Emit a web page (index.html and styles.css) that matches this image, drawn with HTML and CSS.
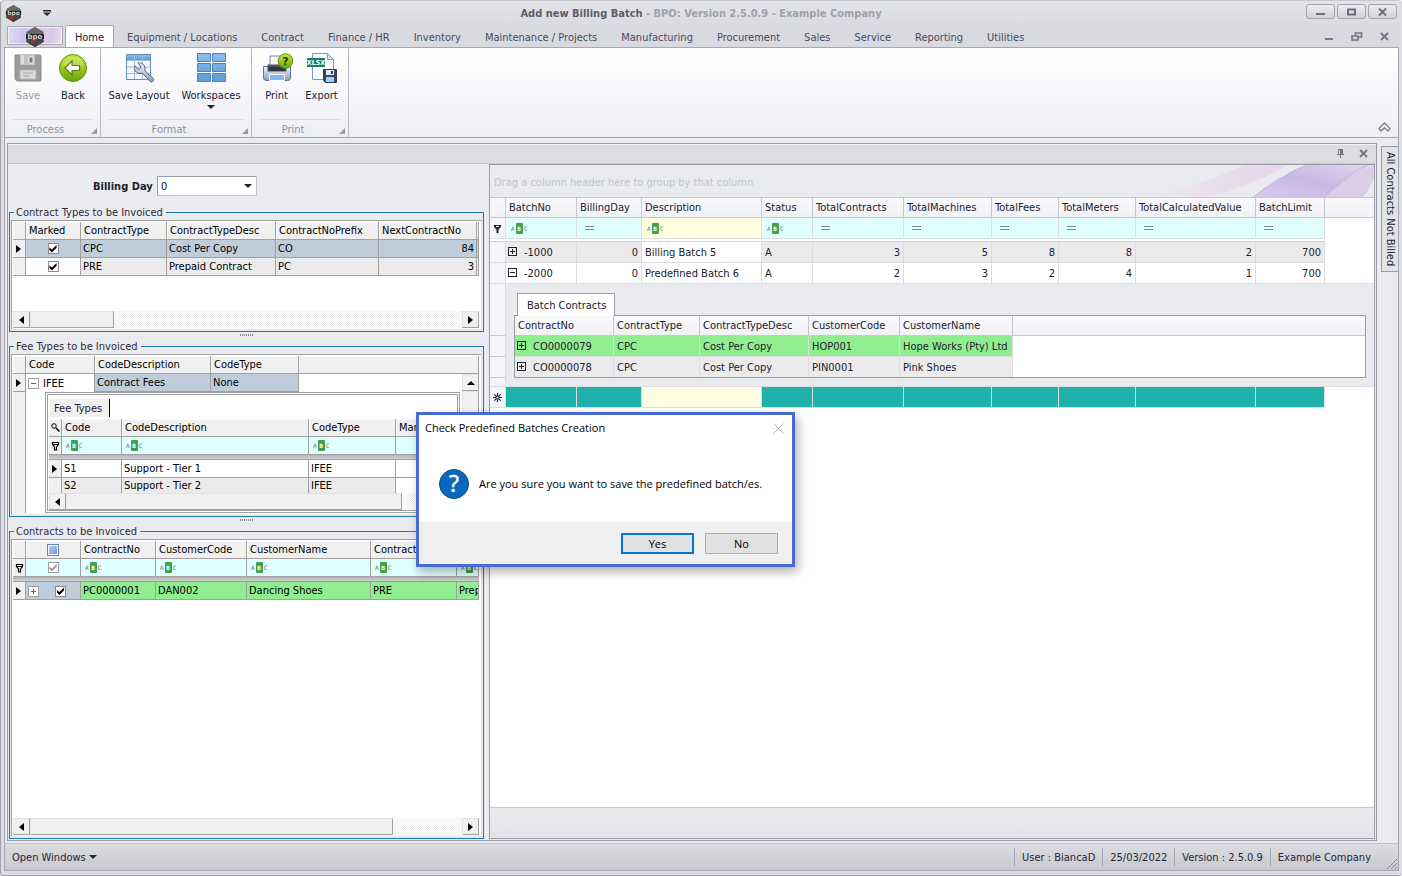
FILE: index.html
```html
<!DOCTYPE html>
<html lang="en">
<head>
<meta charset="utf-8">
<title>Add new Billing Batch - BPO: Version 2.5.0.9 - Example Company</title>
<link rel="stylesheet" href="styles.css">
</head>
<body>
<svg class="defs" aria-hidden="true">
  <defs>
    <linearGradient id="gGreen" x1="0" y1="0" x2="0" y2="1"><stop offset="0" stop-color="#c4e838"/><stop offset=".5" stop-color="#96cc1c"/><stop offset="1" stop-color="#6da30c"/></linearGradient>
    <linearGradient id="gBlue" x1="0" y1="0" x2="0" y2="1"><stop offset="0" stop-color="#8cbfea"/><stop offset="1" stop-color="#5c9bd6"/></linearGradient>
    <linearGradient id="gSteel" x1="0" y1="0" x2="0" y2="1"><stop offset="0" stop-color="#f2f5fa"/><stop offset="1" stop-color="#8f9dbb"/></linearGradient>
    <linearGradient id="gHex" x1="0" y1="0" x2="0" y2="1"><stop offset="0" stop-color="#787878"/><stop offset="1" stop-color="#303030"/></linearGradient>
    <symbol id="logo" viewBox="0 0 20 20">
      <path d="M10 0l8.500 5v10L10 20l-8.500-5V5z" fill="url(#gHex)"/>
      <path d="M10 0l8.500 5-8.500 2-8.500-2z" fill="#696969"/>
      <path d="M10 14l8.500-1v2L10 20l-8.500-5v-2z" fill="#444"/>
      <path d="M1 7h18v5H1z" fill="#222"/>
      <text x="10" y="12" text-anchor="middle" font-family="DejaVu Sans" font-weight="700" font-size="7" fill="#d8d8d8">bpo</text>
      <path d="M6 13l3 3M9 13l-3 3" stroke="#a92b2b" stroke-width="1.500"/>
    </symbol>
    <symbol id="funnel" viewBox="0 0 9 10"><path d="M1.500 1.500h6v2L5.500 6v3h-2V6l-2-2.500z" fill="none" stroke="#000" stroke-width="1.200"/><path d="M1 3.500h7" stroke="#000"/></symbol>
  </defs>
</svg>
<div class="window">
  <header class="titlebar">
    <svg class="title-logo"><use href="#logo"/></svg>
    <button class="quick" aria-label="Customize quick access"><svg width="8" height="6"><path d="M0 0h8v1.500H0zM0 2.500h8L4 6z" fill="#26263a"/></svg></button>
    <h1><strong>Add new Billing Batch</strong> - BPO: Version 2.5.0.9 - Example Company</h1>
    <div class="winbtns">
      <button aria-label="Minimize"><svg width="9" height="8"><path d="M0 5h9v2H0z" fill="#6d6d7c"/></svg></button>
      <button aria-label="Maximize"><svg width="9" height="8"><path d="M1 1.500h7v5H1z" fill="none" stroke="#6d6d7c" stroke-width="2"/></svg></button>
      <button aria-label="Close"><svg width="9" height="8"><path d="M1 .5l7 7M8 .5l-7 7" stroke="#6d6d7c" stroke-width="2"/></svg></button>
    </div>
  </header>
  <nav class="tabs">
    <button class="app" aria-label="Application menu"><svg width="20" height="20"><use href="#logo"/></svg></button>
    <button class="tab on">Home</button>
    <button class="tab">Equipment / Locations</button>
    <button class="tab">Contract</button>
    <button class="tab">Finance / HR</button>
    <button class="tab">Inventory</button>
    <button class="tab">Maintenance / Projects</button>
    <button class="tab">Manufacturing</button>
    <button class="tab">Procurement</button>
    <button class="tab">Sales</button>
    <button class="tab">Service</button>
    <button class="tab">Reporting</button>
    <button class="tab">Utilities</button>
    <div class="mdi">
      <button aria-label="Minimize child"><svg width="10" height="9"><path d="M1 6h8v2H1z" fill="#767685"/></svg></button>
      <button aria-label="Restore child"><svg width="12" height="9"><path d="M4.500 3V1h6v4H8M1 4h6v4H1z" fill="none" stroke="#767685" stroke-width="1.700"/></svg></button>
      <button aria-label="Close child"><svg width="10" height="9"><path d="M1 1l7 7M8 1L1 8" stroke="#767685" stroke-width="2"/></svg></button>
    </div>
  </nav>
  <section class="ribbon">
    <div class="rgroup g1">
      <div class="cmds">
        <button class="cmd dis" disabled>
          <svg width="32" height="32"><path d="M3 3h25a1 1 0 011 1v24a1 1 0 01-1 1H5l-2-2z" fill="#9c9c9c" stroke="#8b8b8b"/><path d="M8 3h15v10H8z" fill="#c4c4c4"/><path d="M9 3h3v9H9z" fill="#e0e0e0"/><path d="M17 5h4v6h-4z" fill="#777" stroke="#f0f0f0"/><path d="M8 18h16v9H8z" fill="#dcdcdc" stroke="#b3b3b3"/><path d="M11 21h10M11 24h7" stroke="#a5a5a5"/></svg>
          <span>Save</span>
        </button>
        <button class="cmd">
          <svg width="32" height="32"><circle cx="16" cy="16" r="13.500" fill="url(#gGreen)" stroke="#5e9208"/><path d="M5 13a11.500 11.500 0 0122 0c-6 4-16 4-22 0z" fill="#fff" opacity=".22"/><path d="M8 16l7-7v4.500h7.500v5H15V23z" fill="#fff" stroke="#5b7f1e" stroke-width="1.200"/></svg>
          <span>Back</span>
        </button>
      </div>
      <div class="caption">Process</div>
    </div>
    <div class="rgroup g2">
      <div class="cmds">
        <button class="cmd wide">
          <svg width="32" height="32"><path d="M3.500 2.500h24v25h-24z" fill="#f4f8fd" stroke="#6b8bb7"/><path d="M4 3h23v5H4z" fill="url(#gBlue)"/><path d="M11.500 3v24M19.500 3v24M4 8.500h23M4 15h23M4 21.500h23" stroke="#a3bbd9"/><path d="M12 14c-1.500 3.500 1 7.500 5 7.500 1 0 1.600-.2 2.300-.5l7.700 8.300c2 2 5-1 3-3L21.700 18.500c1-3-.5-6.500-4-7.500-1-.3-2-.2-3 0l3.300 3.300-.8 2.400-2.400.6z" fill="url(#gSteel)" stroke="#52627f"/></svg>
          <span>Save Layout</span>
        </button>
        <button class="cmd wide">
          <svg width="32" height="32"><g fill="url(#gBlue)" stroke="#4b82bd"><path d="M2.500 1.500h13v8h-13zM17.500 1.500h13v8h-13zM2.500 11.500h13v8h-13zM17.500 11.500h13v8h-13zM2.500 21.500h13v8h-13zM17.500 21.500h13v8h-13z"/></g></svg>
          <span>Workspaces</span><i class="down"></i>
        </button>
      </div>
      <div class="caption">Format</div>
    </div>
    <div class="rgroup g3">
      <div class="cmds">
        <button class="cmd">
          <svg width="32" height="32"><path d="M9 17V4h11l4 4v9z" fill="#f5f8fc" stroke="#7286a8"/><path d="M2.500 14.500h27v11q0 3-3 3h-21q-3 0-3-3z" fill="url(#gSteel)" stroke="#5d6f92"/><path d="M6.500 12.500h19v7h-19z" fill="#4a5366"/><path d="M8 15h16v4H8z" fill="#2f3644"/><path d="M8.500 22.500h15v6h-15z" fill="#7db9ec" stroke="#f8fbff"/><circle cx="24.500" cy="9" r="7.300" fill="url(#gGreen)" stroke="#5c9110"/><text x="24.500" y="13" font-family="DejaVu Sans" font-size="11" font-weight="700" text-anchor="middle" fill="#26390a">?</text></svg>
          <span>Print</span>
        </button>
        <button class="cmd">
          <svg width="32" height="32"><path d="M6.500 1.500h15l6 6v20h-21z" fill="#fbfcfe" stroke="#8c98b0"/><path d="M21.500 1.500v6h6z" fill="#dbe2ee" stroke="#8c98b0"/><path d="M1 6h18v9H1z" fill="#14805e"/><text x="10" y="13" font-family="DejaVu Sans Condensed, DejaVu Sans" font-size="7" font-weight="700" text-anchor="middle" fill="#fff">XLSX</text><path d="M17.500 17.500h13v13h-11l-2-2z" fill="#3a4763" stroke="#2e3950"/><path d="M20 18h8v5h-8z" fill="#e2e9f5"/><path d="M25 19h2v3h-2z" fill="#33405a"/><path d="M20 25h8v5h-8z" fill="#9fd0f4"/></svg>
          <span>Export</span>
        </button>
      </div>
      <div class="caption">Print</div>
    </div>
    <button class="collapse" aria-label="Collapse ribbon"><svg width="13" height="10"><path d="M1 6.500L6.500 1 12 6.500 10 9 6.500 5.700 3 9z" fill="#f4f4f7" stroke="#7d7d8b" stroke-width="1.300"/></svg></button>
  </section>

  <main class="work">
    <section class="dock">
      <div class="dockhead">
        <button aria-label="Pin"><svg width="9" height="9"><path d="M2 0h5v5H2zM1 5h7v1H1zM4 6h1v3H4z" fill="#767685"/><path d="M3 1h1v4H3z" fill="#dcdde1"/></svg></button>
        <button aria-label="Close panel"><svg width="9" height="9"><path d="M1 1l7 7M8 1L1 8" stroke="#767685" stroke-width="2"/></svg></button>
      </div>
      <div class="split">
        <div class="left">
          <div class="billing">
            <label for="day">Billing Day</label>
            <div class="combo"><select id="day"><option>0</option></select></div>
          </div>

          <fieldset class="box">
            <legend>Contract Types to be Invoiced</legend>
            <div class="classic">
              <table class="t">
                <colgroup><col class="w13"><col class="w55"><col class="w86"><col class="w109"><col class="w103"><col class="w98"><col></colgroup>
                <thead><tr><th></th><th>Marked</th><th>ContractType</th><th>ContractTypeDesc</th><th>ContractNoPrefix</th><th>NextContractNo</th><th></th></tr></thead>
                <tbody>
                  <tr class="sel"><td class="ind"><i class="ptr"></i></td><td class="mid"><input type="checkbox" checked aria-label="Mark CPC"></td><td>CPC</td><td>Cost Per Copy</td><td>CO</td><td class="num">84</td><td></td></tr>
                  <tr class="alt"><td class="ind"></td><td class="mid white"><input type="checkbox" checked aria-label="Mark PRE"></td><td>PRE</td><td>Prepaid Contract</td><td>PC</td><td class="num">3</td><td></td></tr>
                </tbody>
              </table>
              <div class="void"></div>
              <div class="hs"><button class="lt" aria-label="Scroll left"></button><div class="thumb short"></div><div class="track"></div><button class="rt" aria-label="Scroll right"></button></div>
            </div>
          </fieldset>
          <div class="grip"></div>

          <fieldset class="box">
            <legend>Fee Types to be Invoiced</legend>
            <div class="classic">
              <table class="t">
                <colgroup><col class="w13"><col class="w69"><col class="w116"><col class="w88"><col></colgroup>
                <thead><tr><th></th><th>Code</th><th>CodeDescription</th><th>CodeType</th><th></th></tr></thead>
              </table>
              <div class="scrolled">
                <div class="grow">
                  <table class="t">
                    <colgroup><col class="w13"><col class="w69"><col class="w116"><col class="w88"><col></colgroup>
                    <tbody><tr class="sel"><td class="ind"><i class="ptr"></i></td><td class="white open-row"><span class="exp minus"></span>IFEE</td><td>Contract Fees</td><td>None</td><td class="white last"></td></tr></tbody>
                  </table>
                  <div class="detail">
                    <div class="rail"></div>
                    <div class="nested">
                      <div class="subtab">Fee Types</div>
                      <table class="t">
                        <colgroup><col class="w13"><col class="w60"><col class="w187"><col class="w87"><col></colgroup>
                        <thead>
                          <tr><th class="ico"><svg width="9" height="9"><circle cx="3" cy="3" r="2.300" fill="none" stroke="#000"/><path d="M5 5l3.500 3.500" stroke="#000" stroke-width="1.500"/></svg></th><th>Code</th><th>CodeDescription</th><th>CodeType</th><th>Marked</th></tr>
                          <tr class="filter"><td class="ind"><svg width="9" height="10"><use href="#funnel"/></svg></td><td><span class="abc">A<b>B</b>C</span></td><td><span class="abc">A<b>B</b>C</span></td><td><span class="abc">A<b>B</b>C</span></td><td></td></tr>
                          <tr class="thick"><td colspan="5"></td></tr>
                        </thead>
                        <tbody>
                          <tr><td class="ind"><i class="ptr"></i></td><td>S1</td><td>Support - Tier 1</td><td>IFEE</td><td></td></tr>
                          <tr class="alt cut"><td class="ind"></td><td>S2</td><td>Support - Tier 2</td><td>IFEE</td><td class="white"></td></tr>
                        </tbody>
                      </table>
                      <div class="hs"><button class="lt" aria-label="Scroll left"></button><div class="thumb mid-thumb"></div><div class="track"></div><button class="rt" aria-label="Scroll right"></button></div>
                    </div>
                  </div>
                </div>
                <div class="vs"><button class="up" aria-label="Scroll up"></button><div class="thumb"></div></div>
              </div>
            </div>
          </fieldset>
          <div class="grip"></div>

          <fieldset class="box fill">
            <legend>Contracts to be Invoiced</legend>
            <div class="classic">
              <table class="t">
                <colgroup><col class="w13"><col class="w55"><col class="w75"><col class="w91"><col class="w124"><col class="w86"><col></colgroup>
                <thead>
                  <tr><th></th><th class="mid"><span class="allbox"></span></th><th>ContractNo</th><th>CustomerCode</th><th>CustomerName</th><th>ContractType</th><th></th></tr>
                  <tr class="filter"><td class="ind"><svg width="9" height="10"><use href="#funnel"/></svg></td><td class="mid"><input class="grey" type="checkbox" checked aria-label="Filter marked"></td><td><span class="abc">A<b>B</b>C</span></td><td><span class="abc">A<b>B</b>C</span></td><td><span class="abc">A<b>B</b>C</span></td><td><span class="abc">A<b>B</b>C</span></td><td><span class="abc">A<b>B</b>C</span></td></tr>
                  <tr class="thick"><td colspan="7"></td></tr>
                </thead>
                <tbody>
                  <tr class="green"><td class="ind"><i class="ptr"></i></td><td class="blue"><span class="exp plus"></span><input class="after" type="checkbox" checked aria-label="Mark PC0000001"></td><td>PC0000001</td><td>DAN002</td><td>Dancing Shoes</td><td>PRE</td><td>Prep</td></tr>
                </tbody>
              </table>
              <div class="void"></div>
              <div class="hs"><button class="lt" aria-label="Scroll left"></button><div class="thumb long"></div><div class="track"></div><button class="rt" aria-label="Scroll right"></button></div>
            </div>
          </fieldset>
        </div>

        <div class="right">
          <div class="groupbar">Drag a column header here to group by that column
            <svg class="swoosh" width="240" height="33" viewBox="0 0 240 33" aria-hidden="true">
              <defs>
                <linearGradient id="s1" x1="0" x2="1"><stop offset="0" stop-color="#eaebef"/><stop offset=".6" stop-color="#e9dcec"/><stop offset="1" stop-color="#e6d6ea"/></linearGradient>
                <linearGradient id="s2" x1="0" y1="1" x2="1" y2="0"><stop offset="0" stop-color="#d6cdec"/><stop offset=".5" stop-color="#c8b8e6"/><stop offset="1" stop-color="#e0d9ec"/></linearGradient>
              </defs>
              <path d="M10 33Q70 20 110 0H154Q120 20 72 33z" fill="url(#s1)"/>
              <path d="M118 33Q144 12 172 0H240V33z" fill="url(#s2)"/>
              <path d="M118 33Q144 12 172 0" fill="none" stroke="#c3b5e0"/>
              <path d="M190 33Q212 12 240 0V15Q234 25 228 33z" fill="#d9cde8"/>
              <path d="M188 33Q210 10 234 0" fill="none" stroke="#cdb6dd"/>
              <path d="M228 33Q236 24 240 12V33z" fill="#eaeaf0"/>
            </svg>
          </div>
          <table class="m">
            <colgroup><col class="w16"><col class="w71"><col class="w65"><col class="w120"><col class="w51"><col class="w91"><col class="w88"><col class="w67"><col class="w77"><col class="w120"><col class="w69"><col></colgroup>
            <thead>
              <tr><th></th><th>BatchNo</th><th>BillingDay</th><th>Description</th><th>Status</th><th>TotalContracts</th><th>TotalMachines</th><th>TotalFees</th><th>TotalMeters</th><th>TotalCalculatedValue</th><th>BatchLimit</th><th class="last"></th></tr>
              <tr class="filter"><td class="ind"><svg width="7" height="9"><path d="M0 1h7v2L4.500 5.500V9h-2V5.500L0 3z" fill="#20202e"/><path d="M2 2.500h3" stroke="#fff"/></svg></td><td><span class="abc">A<b>B</b>C</span></td><td><i class="eq"></i></td><td class="cream"><span class="abc">A<b>B</b>C</span></td><td><span class="abc">A<b>B</b>C</span></td><td><i class="eq"></i></td><td><i class="eq"></i></td><td><i class="eq"></i></td><td><i class="eq"></i></td><td><i class="eq"></i></td><td><i class="eq"></i></td><td class="none"></td></tr>
              <tr class="gap"><td colspan="11"></td><td class="none"></td></tr>
            </thead>
            <tbody>
              <tr class="alt"><td class="ind"></td><td><span class="exp dark plus"></span>-1000</td><td class="num">0</td><td class="white">Billing Batch 5</td><td>A</td><td class="num">3</td><td class="num">5</td><td class="num">8</td><td class="num">8</td><td class="num">2</td><td class="num">700</td><td class="none"></td></tr>
              <tr><td class="ind"></td><td><span class="exp dark minus"></span>-2000</td><td class="num">0</td><td>Predefined Batch 6</td><td>A</td><td class="num">2</td><td class="num">3</td><td class="num">2</td><td class="num">4</td><td class="num">1</td><td class="num">700</td><td class="last"></td></tr>
              <tr class="drow">
                <td class="steps"><div class="st a"></div><div class="st"></div><div class="st"></div><div class="st z"></div></td>
                <td class="dcell" colspan="11">
                  <div class="dtab">Batch Contracts</div>
                  <div class="dgrid">
                    <table class="m">
                      <colgroup><col class="w99"><col class="w86"><col class="w109"><col class="w91"><col class="w113"><col></colgroup>
                      <thead><tr><th>ContractNo</th><th>ContractType</th><th>ContractTypeDesc</th><th>CustomerCode</th><th>CustomerName</th><th class="last"></th></tr></thead>
                      <tbody>
                        <tr class="green"><td><span class="exp dark plus"></span>CO0000079</td><td>CPC</td><td>Cost Per Copy</td><td>HOP001</td><td>Hope Works (Pty) Ltd</td><td class="none"></td></tr>
                        <tr class="alt end"><td><span class="exp dark plus"></span>CO0000078</td><td>CPC</td><td>Cost Per Copy</td><td>PIN0001</td><td>Pink Shoes</td><td class="none"></td></tr>
                      </tbody>
                    </table>
                  </div>
                </td>
              </tr>
              <tr class="teal"><td class="ind"><svg width="9" height="9"><path d="M4.500 0v9M0 4.500h9M1.300 1.300l6.400 6.400M7.700 1.300L1.300 7.700" stroke="#20202e" stroke-width="1.200"/><circle cx="4.500" cy="4.500" r="1" fill="#fff"/></svg></td><td></td><td></td><td class="cream"></td><td></td><td></td><td></td><td></td><td></td><td></td><td></td><td class="none"></td></tr>
            </tbody>
          </table>
          <div class="blank"></div>
          <div class="foot"></div>
        </div>
      </div>
    </section>
    <aside class="side"><button>All Contracts Not Billed</button></aside>
  </main>

  <footer class="status">
    <button class="open">Open Windows <i class="down"></i></button>
    <span>User : BiancaD</span><span>25/03/2022</span><span>Version : 2.5.0.9</span><span class="company">Example Company</span>
    <svg class="size" width="12" height="12"><path d="M1 11L11 1M5 11l6-6M9 11l2-2" stroke="#8d8d99"/></svg>
  </footer>
</div>

<div class="dialog" role="dialog" aria-labelledby="dt">
  <div class="dhead"><span id="dt">Check Predefined Batches Creation</span><button aria-label="Close dialog"><svg width="11" height="11"><path d="M.5.5l10 10M10.500.5l-10 10" stroke="#b4b4b4"/></svg></button></div>
  <div class="dbody">
    <svg width="30" height="30"><circle cx="15" cy="15" r="14.500" fill="#0a69bf" stroke="#0a4a86"/><text x="15" y="23" font-family="Open Sans" font-size="23" text-anchor="middle" fill="#fff" stroke="#fff" stroke-width=".5">?</text></svg>
    <p>Are you sure you want to save the predefined batch/es.</p>
  </div>
  <div class="dfoot"><button class="yes">Yes</button><button>No</button></div>
</div>
</body>
</html>
```
FILE: styles.css
```css
* { box-sizing: border-box; }
html, body { height: 100%; }
body {
  margin: 0;
  font: 11px/13px "DejaVu Sans Condensed", "DejaVu Sans", sans-serif;
  color: #20202e;
  overflow: hidden;
}
button { font: inherit; color: inherit; background: none; border: 0; padding: 0; margin: 0; }
svg { display: block; flex: none; }
.defs { position: absolute; width: 0; height: 0; }

.window {
  min-height: 100vh;
  display: flex;
  flex-direction: column;
  padding: 0 3px 4px;
  background: #dcdde2;
  border: 1px solid #a2a2ac;
  border-top-color: #c8c9ce;
  border-right: 0;
  border-radius: 4px 4px 3px 3px;
}

/* title bar */
.titlebar { display: flex; align-items: center; height: 24px; background: linear-gradient(#e4e5e9, #dadbe0); }
.title-logo { width: 17px; height: 17px; margin-left: 1px; }
.quick { margin-left: 21px; }
.titlebar h1 { flex: 1; margin: 0 0 0 45px; text-align: center; font-size: 11px; font-weight: 700; color: #a0a0ab; }
.titlebar h1 strong { color: #5c5c6c; }
.winbtns { display: flex; gap: 2px; margin: 0 2px 3px 0; }
.winbtns button { display: grid; place-items: center; width: 29px; height: 15px; border: 1px solid #a4a4ae; border-radius: 3px; background: linear-gradient(#ececf0, #d2d3d8); }

/* tab row */
.tabs { display: flex; height: 22px; align-items: stretch; background: #d9dadf; }
.app { width: 56px; height: 19px; margin: 1px 2px 0 3px; border: 1px solid #a9a9b8; box-shadow: inset 0 0 0 1px #f0eef6; background: linear-gradient(100deg, #dfdcf6, #cfc5ea 30%, #dcd0ec 50%, #d9c6e6 80%, #ecdff0); display: grid; place-items: center; }
.tab { padding: 2px 12px 0; color: #4b4b5c; white-space: nowrap; }
.tab.on { width: 49px; padding: 1px 0 0; margin-right: 1px; color: #20202e; background: #fff; border: 1px solid #a6a7b0; border-bottom: 0; border-radius: 2px 2px 0 0; }
.mdi { margin-left: auto; display: flex; gap: 17px; align-items: center; padding-right: 9px; }

/* ribbon */
.ribbon { display: flex; height: 91px; border: 1px solid #a6a7b0; background: linear-gradient(#fff, #f6f6fa 60%, #edeef3); }
.rgroup { display: flex; flex-direction: column; border-right: 1px solid #b9bac3; position: relative; }
.g1 { width: 96px; }
.g2 { width: 151px; }
.g3 { width: 97px; }
.cmds { display: flex; justify-content: center; padding: 4px 2px 0 0; height: 71px; }
.g1 .cmds { padding-right: 4px; }
.cmd { width: 45px; display: flex; flex-direction: column; align-items: center; gap: 5px; white-space: nowrap; }
.cmd.wide { width: 72px; }
.cmd .down { margin-top: -2px; }
.dis { color: #9a9aa5; }
.down { display: inline-block; border: 4px solid transparent; border-top-color: currentColor; border-bottom: 0; width: 0; height: 0; }
.caption { border-top: 1px solid #dddee4; height: 17px; line-height: 19px; margin: 0 7px; padding-right: 14px; text-align: center; color: #90909c; }
.rgroup::after { content: ""; position: absolute; right: 3px; bottom: 3px; border: 3px solid #9c9ca8; border-top-color: transparent; border-left-color: transparent; }
.collapse { margin: auto 7px 5px auto; }

/* work area */
.work { flex: 1; display: flex; min-height: 0; background: #eaebef; border: 1px solid #a6a7b0; border-width: 0 1px; padding: 5px 0 2px 2px; }
.dock { flex: 1; min-width: 0; display: flex; flex-direction: column; border: 1px solid #9a9ba6; background: #eaebef; }
.dockhead { height: 20px; display: flex; justify-content: flex-end; align-items: center; gap: 14px; padding-right: 8px; background: #dcdde1; border-bottom: 1px solid #c6c7cd; box-shadow: inset 0 1px #f2f2f5; }
.split { flex: 1; min-height: 0; display: flex; gap: 5px; }
.left { width: 476px; flex: none; display: flex; flex-direction: column; padding: 0 0 1px 1px; }
.billing { display: flex; align-items: center; gap: 6px; padding: 12px 0 10px 84px; }
.billing label { font-weight: 700; width: 58px; white-space: nowrap; }
.combo { position: relative; width: 100px; height: 20px; }
.combo select { appearance: none; width: 100%; height: 100%; border: 1px solid #c3c4cb; border-top-color: #9a9ba6; border-left-color: #9a9ba6; border-radius: 0; background: #fff; font: inherit; color: #20202e; padding: 0 3px; }
.combo::after { content: ""; position: absolute; right: 5px; top: 8px; border: 4px solid transparent; border-top-color: #20202e; border-bottom: 0; }

/* group boxes */
.box { flex: none; display: flex; flex-direction: column; min-width: 0; margin: 0; padding: 1px; border: 1px solid #1d78ad; }
.box.fill { flex: 1; min-height: 0; }
.box legend { padding: 0 3px 0 2px; margin-left: 3px; color: #2c2c3c; }
.classic { flex: 1; display: flex; flex-direction: column; background: #fff; border: 1px solid #a0a0a0; border-right-color: #e3e3e3; border-bottom-color: #e3e3e3; padding: 1px 2px 1px 1px; min-width: 0; }
.grip { height: 8px; flex: none; background: repeating-linear-gradient(90deg, #8b8b98 0 1px, transparent 1px 2px) center 2px / 13px 2px no-repeat; }
.void { flex: 1; min-height: 35px; }

/* column widths */
.w13 { width: 13px; }
.w16 { width: 16px; }
.w51 { width: 51px; }
.w55 { width: 55px; }
.w60 { width: 60px; }
.w65 { width: 65px; }
.w67 { width: 67px; }
.w69 { width: 69px; }
.w71 { width: 71px; }
.w75 { width: 75px; }
.w77 { width: 77px; }
.w86 { width: 86px; }
.w87 { width: 87px; }
.w88 { width: 88px; }
.w91 { width: 91px; }
.w98 { width: 98px; }
.w99 { width: 99px; }
.w103 { width: 103px; }
.w109 { width: 109px; }
.w113 { width: 113px; }
.w116 { width: 116px; }
.w120 { width: 120px; }
.w124 { width: 124px; }
.w187 { width: 187px; }

/* grids shared */
table { border-collapse: separate; border-spacing: 0; table-layout: fixed; width: 100%; flex: none; }
th, td { font-weight: 400; text-align: left; padding: 0; overflow: hidden; white-space: nowrap; vertical-align: middle; }
.num { text-align: right; }

.t { color: #000; }
.t tr { height: 18px; }
.t th, .t td { border-right: 1px solid #a0a0a0; border-bottom: 1px solid #a0a0a0; height: 18px; padding: 0 0 0 2px; }
.t th { background: #f0f0f0; padding-left: 3px; box-shadow: inset 1px 1px #fafafa; }
.t td.num { padding-right: 2px; }
.t .sel td { background: #bfcddb; }
.t .alt td { background: #ebebeb; }
.t tr .ind { background: #f0f0f0; padding: 0 0 0 3px; }
.t th.ico { padding: 0 0 0 2px; }
.t tr td.white { background: #fff; }
.t td.last { border-right: 0; border-bottom: 0; }
.t td.open-row { border-bottom: 0; }
.t th.mid, .t td.mid { text-align: center; padding: 0; }
.t .mid input { margin: 0 auto; }
.filter td { background: #e0ffff; }
.t .filter td { padding-left: 4px; }
.t .filter td.mid { padding: 0; }
.t .filter td.ind { padding-left: 2px; }
.t tr.thick, .t tr.thick td { height: 5px; }
.t tr.thick td { background: linear-gradient(#b4b4b4, #d0d0d0); border-right: 0; padding: 0; }
.t .cut, .t tr.cut td { height: 15px; border-bottom: 0; }
.green td { background: #90ee90; }
.t .green td.blue { background: #bfcddb; }

.ptr { display: block; width: 0; height: 0; border: 4px solid transparent; border-left: 5px solid #000; border-right: 0; }
input[type=checkbox] { appearance: none; display: block; width: 11px; height: 11px; margin: 0; background: #fff; border: 1px solid #8c8c8c; }
input[type=checkbox]::before { content: ""; display: block; width: 9px; height: 9px; background: #000; clip-path: polygon(10% 40%, 38% 62%, 90% 12%, 90% 42%, 38% 95%, 10% 68%); }
input.grey { border-color: #9c9c9c; }
input.grey::before { background: #9c9c9c; }
.t input.after { display: inline-block; vertical-align: middle; margin-left: 12px; }
.allbox { display: block; width: 12px; height: 12px; margin: 0 auto; border: 1px solid #6f7fae; background: linear-gradient(135deg, #bcd4fb, #6a92e2); box-shadow: inset 0 0 0 1px #fff; }
.abc { display: flex; align-items: center; gap: 1px; width: 18px; height: 11px; color: #666; font: 6px/11px "DejaVu Sans Mono", monospace; }
.abc b { width: 7px; height: 11px; background: #3fa04e; color: #fff; text-align: center; border-radius: 1px; }
.exp { display: inline-block; width: 11px; height: 11px; margin: 0 4px 0 0; vertical-align: middle; border: 1px solid #a0a0a0; background: linear-gradient(#606060, #606060) center / 5px 1px no-repeat #fff; }
.exp.plus { background-image: linear-gradient(#606060, #606060), linear-gradient(#606060, #606060); background-size: 5px 1px, 1px 5px; }
.exp.dark { width: 9px; height: 9px; margin: -2px 7px 0 -8px; border-color: #20202e; background-color: transparent; background-image: linear-gradient(#20202e, #20202e), linear-gradient(#20202e, #20202e); background-size: 5px 1px, 1px 5px; }
.exp.dark.minus { background-size: 5px 1px, 0 0; }

/* scroll bars */
.hs { display: flex; height: 17px; flex: none; }
.hs button, .vs button { width: 17px; height: 17px; flex: none; background: #f0f0f0; border: 1px solid #e3e3e3; border-right-color: #a0a0a0; border-bottom-color: #a0a0a0; display: grid; place-items: center; }
.hs button::before, .vs button::before { content: ""; border: 4px solid transparent; }
.hs .lt::before { border-right: 5px solid #000; border-left: 0; }
.hs .rt::before { border-left: 5px solid #000; border-right: 0; }
.vs .up::before { border-bottom: 4px solid #000; border-top: 0; }
.thumb { background: #f0f0f0; border: 1px solid #e3e3e3; border-right-color: #a0a0a0; border-bottom-color: #a0a0a0; flex: none; }
.short { width: 84px; }
.long { width: 363px; }
.mid-thumb { width: 336px; }
.track { flex: 1; background: repeating-conic-gradient(#f0f0f0 0 25%, #fff 0 50%) 0 0 / 2px 2px; }
.vs { width: 17px; display: flex; flex-direction: column; }
.vs .thumb { flex: 1; }
.scrolled { display: flex; flex: 1; }
.grow { flex: 1; min-width: 0; display: flex; flex-direction: column; }

.detail { flex: 1; display: flex; }
.rail { width: 13px; margin-right: 19px; background: #f0f0f0; border-right: 1px solid #a0a0a0; }
.nested { flex: 1; min-width: 0; margin-right: 2px; border: 3px double #a0a0a0; background: #fff; padding: 0 1px; }
.subtab { width: 60px; height: 18px; margin: 4px 0 2px 1px; background: #f0f0f0; border-right: 1px solid #000; padding: 3px 4px; white-space: nowrap; }

/* main grid */
.right { flex: 1; min-width: 0; display: flex; flex-direction: column; border: 1px solid #9a9ba6; margin: 0 1px 1px 0; background: #fff; }
.groupbar { position: relative; height: 33px; padding: 11px 4px 0; background: #eaebef; border-bottom: 1px solid #c6c7d0; color: #c2c3cb; overflow: hidden; }
.swoosh { position: absolute; right: 0; top: 0; }
.m th, .m td { height: 21px; border-right: 1px solid #dcdde2; border-bottom: 1px solid #dcdde2; padding: 0 3px; }
.m > thead th { height: 20px; background: linear-gradient(#f9f9fc, #f1f2f5); border-color: #c6c7d0; }
.m td.ind { padding: 0; background: #f4f5f8; }
.m .ind svg { margin: 0 auto; }
.m .alt td { background: #ebebeb; }
.m .alt td.ind { background: #f4f5f8; }
.m .alt td.white { background: #fff; }
.m tr td.none { background: #fff; border: 0; }
.m .last { border-right: 0; }
.m .filter td { padding-left: 5px; }
.m .filter td.ind { padding: 0; background: #f4f5f8; }
.m tr .cream, .m .filter td.cream { background: #ffffe1; }
.m .filter .eq { margin-left: 3px; }
.eq { display: block; width: 9px; height: 4px; border: 1px solid #80868c; border-width: 1px 0; }
.m tr.gap td { height: 3px; padding: 0; border-right: 0; border-bottom-color: #d2d3da; background: #fff; }
.m td:has(.exp) { padding-left: 10px; }
.m .drow > td { vertical-align: top; padding: 0; }
.m .steps { background: #f4f5f8; }
.st { height: 21px; border-bottom: 1px solid #c6c7d0; }
.st.a { height: 52px; }
.st.z { height: 8px; border: 0; }
.m .dcell { background: #eaebef; border-right: 0; }
.m .drow > .dcell { padding: 9px 8px 8px; }
.dtab { position: relative; width: 98px; height: 23px; margin: 0 0 -1px 3px; padding: 5px 9px; background: #fff; border: 1px solid #9a9ba6; border-bottom: 0; }
.dgrid { border: 1px solid #9a9ba6; background: #fff; }
.m .green td { background: #90ee90; }
.m .end td { border-bottom: 0; height: 20px; }
.teal td { background: #20b2aa; }
.blank { flex: 1; }
.foot { height: 31px; border-top: 1px solid #c6c7d0; background: linear-gradient(#ececf0, #e2e3e8); }

/* side strip */
.side { width: 21px; padding: 3px 0 0 4px; }
.side button { writing-mode: vertical-rl; width: 17px; height: 126px; border: 1px solid #9a9ba6; border-right: 0; background: #e2e3e7; text-align: left; padding: 5px 0; line-height: 15px; white-space: nowrap; }

/* status bar */
.status { height: 28px; display: flex; align-items: center; border: 1px solid #a6a7b0; border-top-color: #c0c1c8; background: linear-gradient(#dcdde1, #c8c9cf); color: #26263a; }
.open { margin: 0 auto 0 7px; }
.open .down { vertical-align: 2px; }
.status span { border-left: 1px solid #a8a9b1; padding: 3px 7px; white-space: nowrap; }
.status .company { padding-right: 15px; }
.size { align-self: flex-end; }

/* message box */
.dialog { position: absolute; left: 416px; top: 412px; width: 379px; border: 3px solid #456bd9; background: #fff; box-shadow: 3px 5px 10px rgba(0,0,0,.3); color: #000; font: 11px/16px "Open Sans", "Noto Sans", sans-serif; }
.dhead { display: flex; justify-content: space-between; align-items: center; height: 26px; padding: 0 8px 0 6px; }
.dbody { display: flex; align-items: center; gap: 10px; height: 81px; padding: 5px 20px 0; }
.dbody p { margin: 0; white-space: nowrap; }
.dfoot { display: flex; justify-content: flex-end; gap: 11px; height: 42px; padding: 11px 14px 10px; background: #f0f0f0; }
.dfoot button { width: 73px; height: 21px; background: #e1e1e1; border: 1px solid #adadad; line-height: 19px; }
.dfoot .yes { border: 2px solid #0078d7; line-height: 17px; }
```
